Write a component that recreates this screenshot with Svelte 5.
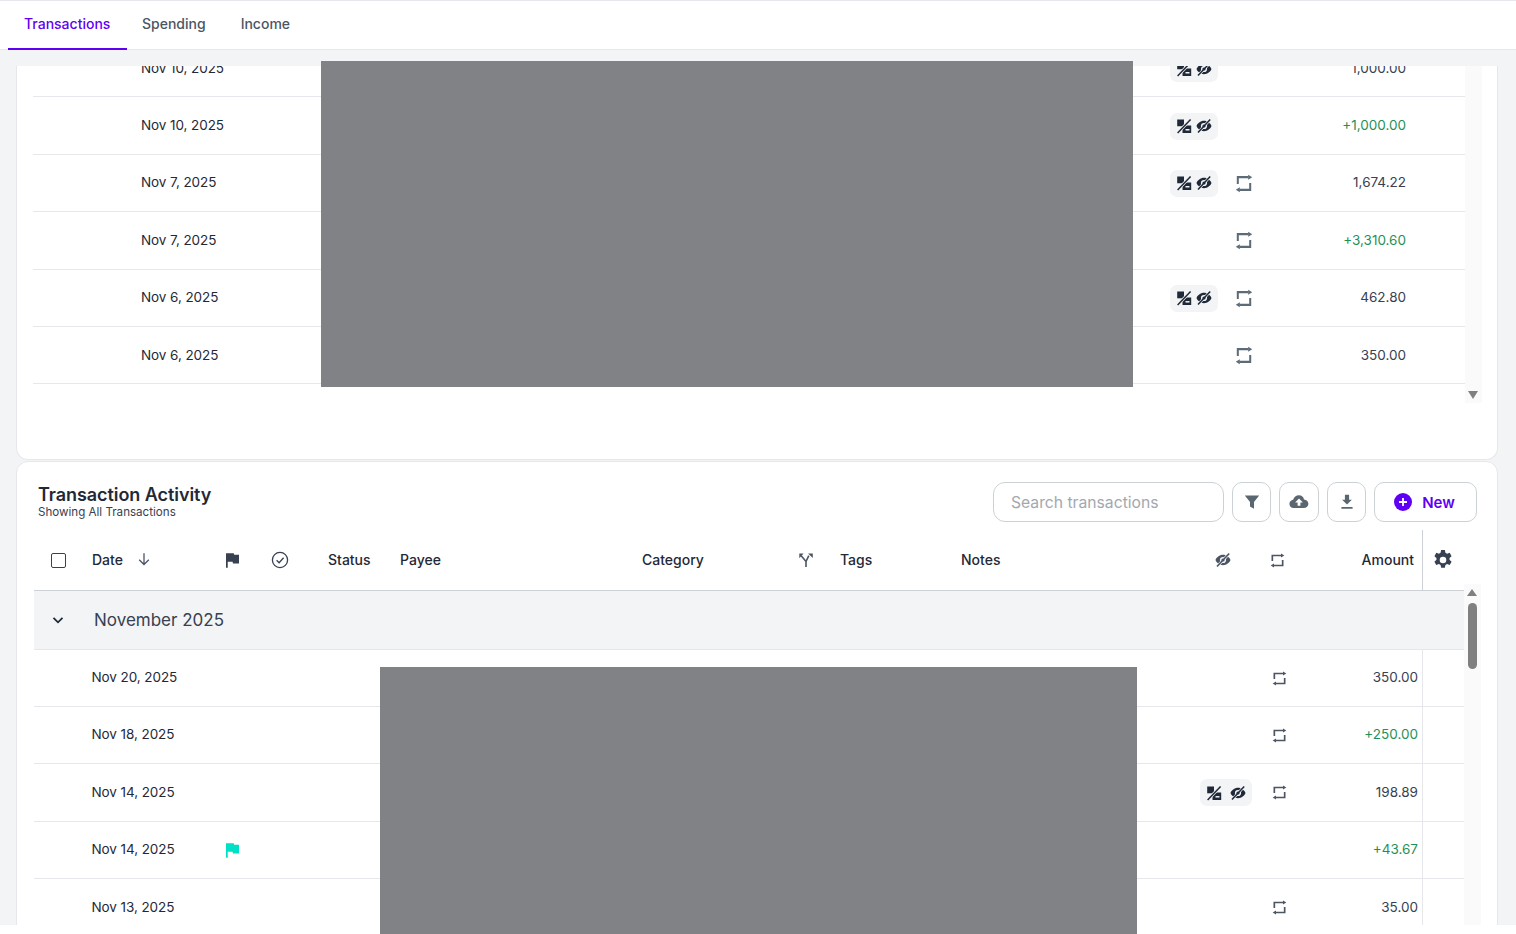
<script>
  const topRows = [
    { d: 'Nov 10, 2025', badge: true, rep: false, a: '1,000.00', pos: false },
    { d: 'Nov 10, 2025', badge: true, rep: false, a: '+1,000.00', pos: true },
    { d: 'Nov 7, 2025', badge: true, rep: true, a: '1,674.22', pos: false },
    { d: 'Nov 7, 2025', badge: false, rep: true, a: '+3,310.60', pos: true },
    { d: 'Nov 6, 2025', badge: true, rep: true, a: '462.80', pos: false },
    { d: 'Nov 6, 2025', badge: false, rep: true, a: '350.00', pos: false }
  ];
  const rows = [
    { d: 'Nov 20, 2025', badge: false, rep: true, a: '350.00', pos: false },
    { d: 'Nov 18, 2025', badge: false, rep: true, a: '+250.00', pos: true },
    { d: 'Nov 14, 2025', badge: true, rep: true, a: '198.89', pos: false },
    { d: 'Nov 14, 2025', badge: false, rep: false, a: '+43.67', pos: true, flag: true },
    { d: 'Nov 13, 2025', badge: false, rep: true, a: '35.00', pos: false }
  ];
</script>

{#snippet repeatIcon(cls)}
  <svg class="rep {cls}" viewBox="0 0 18 18" preserveAspectRatio="none" fill="none" stroke="currentColor" stroke-width="2">
    <path d="M2.800 9.500V3h10.700" />
    <path d="M15.200 8.500V15H4.500" />
    <path d="M13.200 .6L17.200 3l-4 2.400z" fill="currentColor" stroke="none" />
    <path d="M4.800 12.600L.8 15l4 2.400z" fill="currentColor" stroke="none" />
  </svg>
{/snippet}

{#snippet eyeIcon()}
  <svg viewBox="0 0 16 16" width="16" height="16">
    <path fill="currentColor" d="M8 2.800C4.400 2.800 1.500 5.400.5 8c1 2.600 3.900 5.200 7.500 5.200s6.500-2.600 7.500-5.200c-1-2.600-3.900-5.200-7.500-5.200z" />
    <circle cx="8" cy="8" r="3.100" fill="#f3f4f6" />
    <path d="M14 1.800L2.200 14.400" stroke="#f3f4f6" stroke-width="2.800" />
    <path d="M14.200 1.600L2 14.600" stroke="currentColor" stroke-width="1.500" />
    <circle cx="8" cy="8" r="1.600" fill="currentColor" />
  </svg>
{/snippet}

{#snippet pctIcon()}
  <svg viewBox="0 0 16 16" width="16" height="16">
    <path fill="currentColor" d="M1.200 1.500h6.800v6.800H1.200z" />
    <path fill="currentColor" d="M6.500 7.500h8.700v7.500H6.500z" />
    <path d="M14.500 1.500L1.500 15" stroke="#f3f4f6" stroke-width="3" />
    <path d="M14.600 1.400L1.600 15" stroke="currentColor" stroke-width="1.500" />
    <path d="M9.500 11.800h4" stroke="#f3f4f6" stroke-width="1.500" />
  </svg>
{/snippet}

{#snippet badge()}
  <span class="badge">{@render pctIcon()}{@render eyeIcon()}</span>
{/snippet}

{#snippet flagIcon(color)}
  <svg viewBox="5 4 15 17" width="13" height="15"><path fill={color} d="M14.400 6L14 4H5v17h2v-7h5.600l.4 2h7V6z" /></svg>
{/snippet}

<div class="page">
  <div class="root">
    <nav class="tabs">
      <a class="tab active" href="#t">Transactions</a>
      <a class="tab" href="#s">Spending</a>
      <a class="tab" href="#i">Income</a>
    </nav>

    <main class="scroller">
      <section class="card first">
        <div class="list">
          {#each topRows as r}
            <div class="trow">
              <span class="date">{r.d}</span>
              <span class="c">{#if r.badge}{@render badge()}{/if}</span>
              <span class="c">{#if r.rep}{@render repeatIcon('slate')}{/if}</span>
              <span class="amt" class:pos={r.pos}>{r.a}</span>
            </div>
          {/each}
        </div>
        <div class="track top-track"><i class="arrow down"></i></div>
      </section>

      <section class="card second">
        <header class="toolbar">
          <div class="heading">
            <h2>Transaction Activity</h2>
            <p>Showing All Transactions</p>
          </div>
          <div class="actions">
            <input class="search" placeholder="Search transactions" />
            <button class="ib w39" aria-label="Filter">
              <svg viewBox="0 0 16 16" width="16" height="16"><path fill="#5b6770" d="M.8 1.400h14.400L10 8v6.800L6 12.600V8z" /></svg>
            </button>
            <button class="ib w40" aria-label="Upload">
              <svg viewBox="0 0 20 16" width="20" height="16"><path fill="#5b6770" d="M10 1.200c2.600 0 4.700 1.800 5 4.200 2.300.2 4.400 1.900 4.400 4.300 0 2.500-2.100 4.300-4.600 4.300H4.700C2.300 14 .4 12.200.4 9.900c0-2.100 1.600-3.800 3.700-4.100C4.900 3.100 7.100 1.200 10 1.200z" /><path fill="#fff" d="M10 4.600l3.900 4h-2.500v3.200H8.600V8.600H6.100z" /></svg>
            </button>
            <button class="ib w39" aria-label="Download">
              <svg viewBox="0 0 16 16" width="16" height="16"><path fill="#5b6770" d="M5.900 .8h4.200v4.900h2.800L8 10.600 3.100 5.700h2.800zM2.400 13h11.200v1.700H2.400z" /></svg>
            </button>
            <button class="new">
              <svg viewBox="0 0 18 18" width="18" height="18"><circle cx="9" cy="9" r="9" fill="#5f00f5" /><path d="M9 5v8M5 9h8" stroke="#fff" stroke-width="1.800" /></svg>
              New
            </button>
          </div>
        </header>

        <div class="thead">
          <span class="chk"><i class="box"></i></span>
          <span class="th date-h">Date
            <svg viewBox="0 0 14 14" width="14" height="14" fill="none" stroke="#4b5563" stroke-width="1.300"><path d="M7 1.200v11.300M2.200 7.800L7 12.500l4.800-4.700" /></svg>
          </span>
          <span class="ic">{@render flagIcon('#374151')}</span>
          <span class="ic">
            <svg viewBox="0 0 18 18" width="18" height="18" fill="none" stroke="#374151" stroke-width="1.300"><circle cx="9" cy="9" r="7.600" /><path d="M5.600 9.200l2.500 2.500 4.500-5" /></svg>
          </span>
          <span class="th">Status</span>
          <span class="th">Payee</span>
          <span class="th">Category</span>
          <span class="ic">
            <svg viewBox="0 0 16 16" width="16" height="16" fill="none" stroke="#4b5563" stroke-width="1.600"><path d="M8 15V9.500L3 3.600M8 9.500l2.800-5.900" /><path d="M1.300 6.300V1.600h4.300zM10.100 1.600h4.700v4.500z" fill="#4b5563" stroke="none" /></svg>
          </span>
          <span class="th">Tags</span>
          <span class="th">Notes</span>
          <span class="ic h-eye">{@render eyeIcon()}</span>
          <span class="ic h-rep">{@render repeatIcon('slate-dark')}</span>
          <span class="th h-amt">Amount</span>
          <span class="gear">
            <svg viewBox="0 0 20 20" width="22" height="22"><path fill="#374151" fill-rule="evenodd" d="M8.300 1h3.400l.5 2.500c.5.200 1 .5 1.500.8l2.400-.8 1.700 3-1.900 1.700c.1.500.1 1.100 0 1.600l1.900 1.700-1.700 3-2.400-.8c-.5.300-1 .6-1.500.8l-.5 2.500H8.300l-.5-2.500c-.5-.2-1-.5-1.500-.8l-2.400.8-1.700-3 1.900-1.700c-.1-.5-.1-1.100 0-1.600L2.200 6.500l1.700-3 2.400.8c.5-.3 1-.6 1.500-.8zM10 7a3 3 0 1 0 0 6 3 3 0 0 0 0-6z" /></svg>
          </span>
        </div>

        <div class="group">
          <svg viewBox="0 0 12 12" width="12" height="12" fill="none" stroke="#1f2937" stroke-width="1.800"><path d="M1.500 3.800L6 8.300l4.500-4.500" /></svg>
          <span>November 2025</span>
        </div>

        {#each rows as r}
          <div class="brow">
            <span class="date">{r.d}</span>
            <span class="flagcell">
              {#if r.flag}{@render flagIcon('#00e0c6')}{/if}
            </span>
            <span class="c">{#if r.badge}{@render badge()}{/if}</span>
            <span class="c rc">{#if r.rep}{@render repeatIcon('slate-dark')}{/if}</span>
            <span class="amt" class:pos={r.pos}>{r.a}</span>
            <span class="tail"></span>
          </div>
        {/each}

        <div class="track bottom-track">
          <i class="arrow up"></i>
          <i class="thumb"></i>
        </div>
      </section>
    </main>
  </div>

  <div class="redact r1"></div>
  <div class="redact r2"></div>
</div>

<style>
  :global(body) {
    margin: 0;
    background: #fff;
    overflow: hidden;
  }
  * {
    box-sizing: border-box;
  }
  .page {
    position: relative;
    height: 934px;
    overflow: hidden;
  }
  .root {
    height: 925px;
    background: #f3f4f6;
    font-family: Inter, "Liberation Sans", sans-serif;
    color: #1f2937;
    font-size: 14px;
  }
  .tabs {
    height: 50px;
    display: flex;
    background: #fff;
    border-top: 1px solid #e5e7eb;
    border-bottom: 1px solid #e5e7eb;
    padding-left: 8px;
  }
  .tab {
    height: 49px;
    display: flex;
    align-items: center;
    font-size: 14px;
    font-weight: 500;
    color: #4b5563;
    text-decoration: none;
    padding: 0 15px 4px;
  }
  .tab.active {
    color: #5f00f5;
    font-weight: 500;
    border-bottom: 2px solid #5f00f5;
    padding: 0 0 2px 16px;
    width: 119px;
  }
  .tab:nth-child(3) {
    padding-left: 20px;
  }
  .scroller {
    position: relative;
    height: 859px;
    margin-top: 16px;
    padding: 0 18px 0 16px;
    overflow: hidden;
  }
  .card {
    position: relative;
    background: #fff;
    border: 1px solid #e5e7eb;
    overflow: hidden;
  }
  .first {
    height: 394px;
    border-top: 0;
    border-radius: 0 0 12px 12px;
    padding-left: 16px;
  }
  .list {
    width: 1432px;
    margin-top: -26px;
  }
  .trow {
    height: 57.400px;
    display: grid;
    grid-template-columns: 1fr 48px 35px 153px;
    align-items: center;
    padding: 0 59px 1px 108px;
    border-bottom: 1px solid #e5e7eb;
  }
  .trow .c:nth-child(3) {
    margin-left: 17px;
  }
  .date {
    color: #1f2937;
    font-size: 13.500px;
    letter-spacing: -0.08px;
  }
  .amt {
    text-align: right;
    font-size: 13.500px;
    color: #374151;
  }
  .amt.pos {
    color: #1f9158;
  }
  .c {
    display: flex;
    align-items: center;
    margin-top: 2px;
  }
  .badge {
    display: inline-flex;
    align-items: center;
    justify-content: center;
    gap: 4px;
    width: 48px;
    height: 27px;
    border-radius: 7px;
    background: #f3f4f6;
    color: #1f2937;
  }
  .rep {
    display: block;
  }
  .slate {
    color: #5b6b78;
    width: 18px;
    height: 19px;
  }
  .slate-dark {
    color: #4b5563;
    width: 15px;
    height: 15px;
  }
  .track {
    position: absolute;
    width: 17px;
    background: #fafafa;
  }
  .top-track {
    left: 1448px;
    top: 0;
    height: 337px;
  }
  .arrow {
    position: absolute;
    left: 3px;
    width: 0;
    height: 0;
    border-left: 5.500px solid transparent;
    border-right: 5.500px solid transparent;
  }
  .arrow.down {
    top: 325px;
    border-top: 8px solid #808080;
  }
  .second {
    height: 480px;
    border-radius: 12px 12px 0 0;
    margin-top: 1px;
    padding-left: 17px;
  }
  .toolbar {
    height: 68px;
    display: flex;
    justify-content: space-between;
    padding: 20px 20px 0 4px;
  }
  .heading {
    padding-top: 1px;
  }
  h2 {
    margin: 0;
    font-size: 18px;
    line-height: 24px;
    font-weight: 600;
    letter-spacing: -0.06px;
    color: #1f2937;
  }
  p {
    margin: -2px 0 0;
    font-size: 11.600px;
    line-height: 14px;
    color: #374151;
  }
  .actions {
    display: flex;
    gap: 8px;
    height: 40px;
  }
  .search {
    width: 231px;
    height: 40px;
    border: 1px solid #cbd2d6;
    border-radius: 12px;
    padding: 0 17px;
    font: 15.700px Inter, sans-serif;
    outline: none;
  }
  .search::placeholder {
    color: #a3a8ae;
  }
  .ib,
  .new {
    height: 40px;
    background: #fff;
    border: 1px solid #cbd2d6;
    border-radius: 10px;
    display: flex;
    align-items: center;
    justify-content: center;
    padding: 0;
  }
  .w39 {
    width: 39px;
  }
  .w40 {
    width: 40px;
  }
  .new {
    width: 103px;
    gap: 10px;
    padding-right: 2px;
    color: #5f00f5;
    font: 600 15px Inter, sans-serif;
  }
  .thead {
    height: 61px;
    display: grid;
    grid-template-columns: 58px 134px 45px 57px 72px 242px 156px 42px 121px 253px 56px 30px 122px 42px;
    align-items: center;
    width: 1430px;
    border-bottom: 1px solid #cdd1d5;
  }
  .chk {
    padding-left: 17px;
    display: flex;
  }
  .box {
    display: block;
    width: 15px;
    height: 15px;
    border: 1.500px solid #374151;
    border-radius: 2px;
  }
  .th {
    font-size: 14px;
    font-weight: 500;
    color: #1f2937;
    padding-bottom: 2px;
  }
  .date-h {
    display: flex;
    align-items: center;
    gap: 14px;
  }
  .ic {
    display: flex;
    color: #4b5563;
  }
  .h-eye {
    padding-left: 1px;
  }
  .h-amt {
    text-align: right;
    padding-right: 8px;
  }
  .gear {
    height: 60px;
    display: flex;
    align-items: center;
    padding-left: 9px;
    border-left: 1px solid #cdd1d5;
  }
  .group {
    position: relative;
    width: 1430px;
    height: 59px;
    margin-bottom: -0.600px;
    background: #f3f4f6;
    border-bottom: 1px solid #e5e7eb;
    display: flex;
    align-items: center;
    gap: 30px;
    padding-left: 18px;
    font-size: 17px;
    color: #374151;
  }
  .brow {
    width: 1430px;
    height: 57.400px;
    display: grid;
    grid-template-columns: 58px 134px 974px 52px 36px 134px 42px;
    align-items: center;
    padding-bottom: 1px;
    border-bottom: 1px solid #e5e7eb;
  }
  .brow .date {
    grid-column: 2;
    margin-left: -0.500px;
  }
  .brow .badge {
    width: 52px;
    gap: 8px;
  }
  .flagcell {
    display: flex;
    margin-top: 2px;
  }
  .brow .c:nth-child(3) {
    grid-column: 4;
  }
  .rc {
    padding-left: 20px;
  }
  .brow .amt {
    padding-right: 4px;
  }
  .tail {
    align-self: stretch;
    border-left: 1px solid #e5e7eb;
    margin-bottom: -1px;
  }
  .bottom-track {
    left: 1447px;
    top: 122px;
    height: 360px;
  }
  .arrow.up {
    top: 5px;
    border-bottom: 7px solid #808080;
  }
  .thumb {
    position: absolute;
    left: 4px;
    top: 19px;
    width: 9px;
    height: 66px;
    border-radius: 5px;
    background: #808080;
  }
  .redact {
    position: absolute;
    background: #818285;
  }
  .r1 {
    left: 321px;
    top: 61px;
    width: 812px;
    height: 326px;
  }
  .r2 {
    left: 380px;
    top: 667px;
    width: 757px;
    height: 267px;
  }
</style>
